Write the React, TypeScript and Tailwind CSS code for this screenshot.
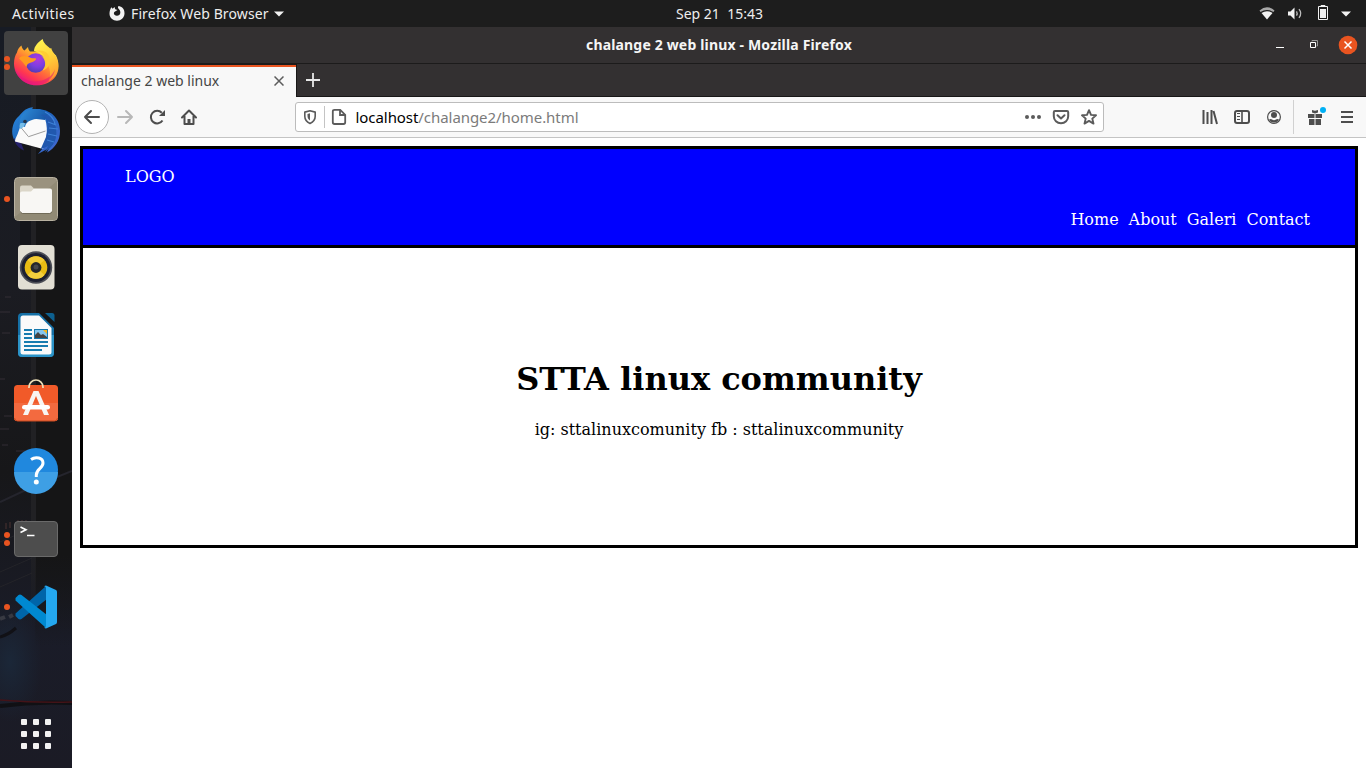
import type { ReactNode } from "react";

const UI = "font-['Noto_Sans','Open_Sans',sans-serif]";

function FirefoxIcon() {
  return (
    <svg width="48" height="48" viewBox="0 0 48 48">
      <defs>
        <linearGradient id="fx" x1="0.85" y1="0.1" x2="0.25" y2="0.95">
          <stop offset="0" stopColor="#fff44f" />
          <stop offset="0.3" stopColor="#ffb52b" />
          <stop offset="0.55" stopColor="#ff7139" />
          <stop offset="0.8" stopColor="#ff3750" />
          <stop offset="1" stopColor="#e31587" />
        </linearGradient>
        <radialGradient id="fxg" cx="0.6" cy="0.3" r="0.8">
          <stop offset="0" stopColor="#b338dc" />
          <stop offset="0.5" stopColor="#7a3fe0" />
          <stop offset="1" stopColor="#4a3aa8" />
        </radialGradient>
        <linearGradient id="fxy" x1="0.3" y1="0" x2="0.6" y2="1">
          <stop offset="0" stopColor="#fff44f" />
          <stop offset="0.5" stopColor="#ffd03a" />
          <stop offset="1" stopColor="#ff9a2e" />
        </linearGradient>
      </defs>
      <path d="M9.500 6.500c.3 2.500 1.500 4 3 5l3.500-3.500c.2 2 .8 3 2 4.500h8c3-5 13-2 18 4 3.500 7 3.500 15-.5 21C39.500 43 32 46.500 24 46.300 12 46 2 36.500 2 24.500c0-4.500 1-8 3-11 .3-2.500 2-5 4.500-7z" fill="url(#fx)" />
      <path d="M22 12c0-5 5-9.500 8.700-12 .8 4.500 4 6 7.500 9.500l1-.5c.3 2.500 2.500 4.500 4.500 8 5 10 2 20-7 25 2-6 2-11-1-16-2-6-5-12-13.700-14z" fill="url(#fxy)" />
      <circle cx="23.700" cy="24" r="9.800" fill="url(#fxg)" />
      <path d="M7 19.500c2-3 7-3 10.500-1.200 2 1.200 4.500.9 6.700 1.100-.2 2-3 3.500-5.200 4-3 .8-4 2-4.500 4.500C12 25 10 22 7 19.500z" fill="#ff9a1f" />
      <path d="M24 12c4 .3 7.500 3 9 7l-4-2.500c5 4 5.500 11 1.500 15 5-1 8-6 7-12-1-6-6-9-13.500-7.500z" fill="#ffcb32" opacity=".9" />
      <path d="M3 29c3 9 13 15 24 13 8-1 14-6 16-12-1 9-9 16.300-19 16.300S4 39 3 29z" fill="#e5157c" opacity=".55" />
    </svg>
  );
}

function ThunderbirdIcon() {
  return (
    <svg width="48" height="48" viewBox="0 0 48 48">
      <defs>
        <linearGradient id="tb" x1="0" y1="0" x2="1" y2="0.8">
          <stop offset="0" stopColor="#2a8be0" />
          <stop offset="0.5" stopColor="#1c62b8" />
          <stop offset="1" stopColor="#4169d0" />
        </linearGradient>
        <linearGradient id="tbh" x1="0" y1="0" x2="1" y2="0.4">
          <stop offset="0" stopColor="#2f8fdb" />
          <stop offset="1" stopColor="#1858a8" />
        </linearGradient>
      </defs>
      <path d="M7 9C12 3 15 1 21 .3L20 2.500C35 0 48 9 48 24c0 10-5 17-13 21.500l2-4.500-11 6 5-6L3 34C0 30-.5 24 1 18.500 2 14.500 4 11.500 7 9z" fill="url(#tb)" />
      <path d="M2 31c1 6 4 10 10 12.500L9.500 37z" fill="#24206b" />
      <path d="M8.500 19L20 12l13-.5c2 6 2.500 13 1 20L31 42 3 34.500c0-3 2-5 3.500-10z" fill="#fafafa" />
      <path d="M8.500 20l8 9.700 17-5.700" fill="none" stroke="#9c9c9c" strokeWidth="1" />
      <path d="M7 20C6.500 9 14 2 21 2c6 0 11 1 15 5l-3 6c-4 0-9-2-13 0-4 1-6 3-7 7-2-1-4-1-6 0z" fill="url(#tbh)" />
      <path d="M8.500 16c-1 2-1.500 4-.2 6 3-1 4.200-3 5-6z" fill="#76bde8" />
      <circle cx="13" cy="14.500" r="1.800" fill="#26354a" />
      <path d="M28 8c8 1 9 10 6 22l-5.500 12.500L36 39l-3 6c9-6 12.500-13 11-23C43 11 36 7 28 8z" fill="#2158ae" />
      <path d="M33 5c6 3 9 7 10 12M36 15l8 3M37 21l9 1M36 27l9 2M35 33l7 2" stroke="#3f82d8" strokeWidth="1.200" fill="none" />
    </svg>
  );
}

function FilesIcon() {
  return (
    <svg width="48" height="48" viewBox="0 0 48 48">
      <rect x="2.500" y="2.500" width="43" height="43" rx="4" fill="#9a927f" stroke="#b9b2a1" />
      <path d="M3 42L45 6v36q0 3-3 3H6q-3 0-3-3z" fill="#918a75" />
      <path d="M8 12.500q0-2 2-2h9l3 3v7H8z" fill="#dbd6c8" />
      <path d="M8 18.500q0-2 2-2h9l3-3h16q2 0 2 2V36q0 2-2 2H10q-2 0-2-2z" fill="#f8f7f4" />
      <path d="M8.500 36.500q.5 2 2 2h27q2 0 2.500-2" fill="none" stroke="#716b58" strokeWidth="1" />
    </svg>
  );
}

function MusicIcon() {
  return (
    <svg width="48" height="48" viewBox="0 0 48 48">
      <rect x="6" y="2" width="36.500" height="44.500" rx="4" fill="#e2dfd4" />
      <circle cx="24" cy="24.500" r="16.200" fill="#4b4d55" />
      <circle cx="24" cy="24.500" r="14.500" fill="#1d2030" />
      <circle cx="24" cy="24.500" r="11.300" fill="#e8bb13" />
      <path d="M24 24.500L15.500 17a11.300 11.300 0 0 1 17 0z" fill="#f3cb35" />
      <path d="M24 24.500L15.500 32a11.300 11.300 0 0 0 17 0z" fill="#f3cf3d" />
      <circle cx="24" cy="24.500" r="5.400" fill="#25262b" />
      <circle cx="24" cy="24" r="2.500" fill="#46474c" />
    </svg>
  );
}

function WriterIcon() {
  return (
    <svg width="48" height="48" viewBox="0 0 48 48">
      <path d="M10 2h17l15 15v25q0 4-4 4H10q-4 0-4-4V6q0-4 4-4z" fill="#1570a6" />
      <path d="M6 24h36v18q0 4-4 4H10q-4 0-4-4z" fill="#2b93c7" />
      <path d="M33 2h7q2.500 0 2.500 2.500V11z" fill="#0d608f" />
      <path d="M11 4.500h16L39.500 17v24q0 2.500-2.500 2.500H11q-2.500 0-2.500-2.500V7q0-2.500 2.500-2.500z" fill="#fafafa" />
      <path d="M12 19h8M12 23h8M12 27h8M12 31h24M12 35h24M12 39h18" stroke="#187caf" strokeWidth="2" />
      <rect x="22" y="18" width="14" height="10" fill="#1477ac" />
      <rect x="23" y="19" width="12" height="8" fill="#84c6ef" />
      <path d="M31 19h4v4z" fill="#f4b51e" />
      <path d="M23 27v-3l3-3 3 3 2-1 4 3v1z" fill="#434343" />
    </svg>
  );
}

function SoftwareIcon() {
  return (
    <svg width="48" height="48" viewBox="0 0 48 48">
      <rect x="2" y="6" width="44" height="36" rx="3.500" fill="#f15a29" />
      <path d="M2 24h44v14.500q0 3.500-3.500 3.500h-37Q2 42 2 38.500z" fill="#f36a3f" />
      <path d="M2.500 39q.5 3 3 3h37q2.500 0 3-3" fill="none" stroke="#c94a20" />
      <path d="M17 9V8a7 7 0 0 1 14 0v1" fill="none" stroke="#eee0b9" strokeWidth="1.700" />
      <path d="M21.500 12h5L37 36h-5l-8-19-8 19h-5z" fill="#f8f5f2" />
      <rect x="10" y="26" width="28" height="4.600" rx="2.300" fill="#fff" />
    </svg>
  );
}

function HelpIcon() {
  return (
    <svg width="48" height="48" viewBox="0 0 48 48">
      <circle cx="24" cy="23" r="22" fill="#2088de" />
      <path d="M2 25a22 22 0 0 0 44 0z" fill="#3e9fe5" />
      <path d="M19 12.500c5-3.500 12-1.500 12 3.500 0 5.500-6.700 6-6.700 12v2" fill="none" stroke="#fff" strokeWidth="3" />
      <circle cx="24.300" cy="35" r="2.500" fill="#fff" />
    </svg>
  );
}

function TerminalIcon() {
  return (
    <svg width="48" height="48" viewBox="0 0 48 48">
      <rect x="2.500" y="6.500" width="43" height="35" rx="3.500" fill="#4d4d4d" stroke="#6a6a6a" />
      <path d="M8.500 12l5.500 2.700-5.500 2.800" fill="none" stroke="#fff" strokeWidth="1.600" />
      <path d="M15 20.500h7.500" stroke="#fff" strokeWidth="1.500" />
    </svg>
  );
}

function CodeIcon() {
  return (
    <svg width="48" height="48" viewBox="0 0 48 48">
      <path d="M34 3L3.500 30.500v2.500l3 3q1.500.8 3 0L35 16z" fill="#0065a9" />
      <path d="M34 45L3.500 17.500V15l3-3q1.500-.8 3 0L35 32z" fill="#0089d1" />
      <path d="M34 2.500l10 4.500q1 .5 1 2v30q0 1.500-1 2l-10 4.500q-1 0-2-1 2 .5 2-1.500V5q0-2-2-1.500 1-1 2-1z" fill="#24a8f0" />
    </svg>
  );
}

function DockItem({ children, dots = 0, active = false }: { children: ReactNode; dots?: number; active?: boolean }) {
  return (
    <div className={active ? "relative flex h-16 w-16 shrink-0 items-center justify-center rounded bg-[#414141]" : "relative flex h-16 w-16 shrink-0 items-center justify-center"}>
      {children}
      <div className="absolute top-0 left-0 flex h-full flex-col justify-center gap-0.5">
        {Array.from({ length: dots }, (_, i) => (
          <span key={i} className="h-1.5 w-1.5 rounded-full bg-[#e95420]" />
        ))}
      </div>
    </div>
  );
}

function Dock() {
  return (
    <aside className="relative w-[72px] shrink-0 overflow-hidden bg-[#17171b]">
      <svg className="absolute inset-0" width="72" height="741" viewBox="0 0 72 741">
        <defs>
          <linearGradient id="wall" x1="0" y1="0" x2="0" y2="1">
            <stop offset="0" stopColor="#171b24" />
            <stop offset="0.35" stopColor="#1b1c22" />
            <stop offset="0.6" stopColor="#171719" />
            <stop offset="0.82" stopColor="#1a1c28" />
            <stop offset="1" stopColor="#1b1b25" />
          </linearGradient>
          <linearGradient id="pillar" x1="0" y1="0" x2="0" y2="1">
            <stop offset="0" stopColor="#151516" />
            <stop offset="0.85" stopColor="#151516" />
            <stop offset="1" stopColor="#151516" stopOpacity="0" />
          </linearGradient>
          <linearGradient id="edge" x1="0" y1="0" x2="0" y2="1">
            <stop offset="0" stopColor="#212124" />
            <stop offset="0.85" stopColor="#212124" />
            <stop offset="1" stopColor="#212124" stopOpacity="0" />
          </linearGradient>
          <radialGradient id="glow">
            <stop offset="0" stopColor="#1b2738" />
            <stop offset="1" stopColor="#1b2738" stopOpacity="0" />
          </radialGradient>
        </defs>
        <rect width="72" height="741" fill="url(#wall)" />
        <rect x="35" width="37" height="620" fill="url(#pillar)" />
        <rect x="31" width="5" height="600" fill="url(#edge)" />
        <rect x="20" y="110" width="11" height="110" fill="#14151a" />
        <ellipse cx="10" cy="635" rx="32" ry="60" fill="url(#glow)" />
        <path d="M0 475l30-14 42-17" stroke="#25252d" strokeWidth="2" fill="none" />
        <path d="M0 560l32-14M0 545l32-14M0 515l32-14" stroke="#242429" fill="none" />
        <path d="M5 270h6M0 285h10M2 306h8M0 352h5M4 389h8M0 402h9M2 418h6M16 424h12" stroke="#373039" strokeWidth="1.500" opacity=".6" />
        <path d="M6 496v6M10 495v6M18 493v6M22 493v6M26 493v6" stroke="#3a2a2b" strokeWidth="1.500" />
        <path d="M0 592l5-2M9 590l4-2" stroke="#55555a" strokeWidth="4" opacity=".5" />
        <path d="M0 610q8-2 16-9" stroke="#111116" strokeWidth="3" fill="none" />
        <path d="M0 679q36-5 72-3" stroke="#101014" strokeWidth="4" fill="none" />
        <path d="M0 673q36 3 72 2" stroke="#431318" strokeWidth="1.500" fill="none" />
      </svg>
      <div className="relative flex h-full flex-col gap-1 px-1 pt-1">
        <DockItem active dots={2}><FirefoxIcon /></DockItem>
        <DockItem><ThunderbirdIcon /></DockItem>
        <DockItem dots={1}><FilesIcon /></DockItem>
        <DockItem><MusicIcon /></DockItem>
        <DockItem><WriterIcon /></DockItem>
        <DockItem><SoftwareIcon /></DockItem>
        <DockItem><HelpIcon /></DockItem>
        <DockItem dots={2}><TerminalIcon /></DockItem>
        <DockItem dots={1}><CodeIcon /></DockItem>
        <div className="mt-auto mb-[19px] grid grid-cols-3 gap-1.5 self-center">
          {Array.from({ length: 9 }, (_, i) => (
            <span key={i} className="h-1.5 w-1.5 rounded-[1px] bg-[#f2f2f2]" />
          ))}
        </div>
      </div>
    </aside>
  );
}

function TopBar() {
  return (
    <header className="grid h-[27px] shrink-0 grid-cols-[583px_1fr_583px] items-center bg-[#1d1d1d] text-[14px] leading-[27px] text-[#eeeeee]">
      <div className="flex items-center pl-3">
        <span className="w-[97px] tracking-[0.42px]">Activities</span>
        <svg width="16" height="16" viewBox="0 0 16 16" className="mr-1.5">
          <path d="M2.300 1.300l1.400 1.500L5.500 1l.7 2.300 2.300.8-2 1.200c-2.500 1-2 4.300 1.300 4.500 4 .2 4.600-4.500 2-6.800-1-.8-1.200-2.400 0-3 4 .8 6 4 5.700 7.800-.3 4-3.500 7-7.500 7S.5 11.800.5 7.800c0-2.400.7-4.800 1.800-6.500z" fill="#f2f2f2" />
        </svg>
        <span className="w-[143px] tracking-[0.12px] whitespace-nowrap">Firefox Web Browser</span>
        <svg width="10" height="6" viewBox="0 0 10 6"><path d="M0 .5h10L5 5.500z" fill="#f2f2f2" /></svg>
      </div>
      <div className="pl-[93px] whitespace-pre">Sep 21  15:43</div>
      <div className="flex items-center justify-end pr-[15px]">
        <svg width="92" height="18" viewBox="0 0 92 18" fill="#f2f2f2">
          <path d="M.5 5.500q7.500-6.500 15 0l-1 1.500q-6.500-4-13 0z" opacity=".65" />
          <path d="M2.500 8q5.500-3.500 11 0L8 14.500z" />
          <path d="M29 6.500h2.500l4-4v12l-4-4H29z" />
          <path d="M37.500 6.300q1.300 2.200 0 4.400M40 4.200q3.500 4.200 0 8.600" fill="none" stroke="#bdbdbd" strokeWidth="1.300" />
          <path d="M62 .5h4v1h-4zM59.500 1.500h9v13h-9z" fill="none" stroke="#f2f2f2" />
          <path d="M61 4h6v9h-6zM82 6.500h10l-5 5z" />
        </svg>
      </div>
    </header>
  );
}

function TitleBar() {
  return (
    <div className="grid h-[37px] shrink-0 grid-cols-[500px_1fr_500px] items-center border-b border-[#1c1b1b] bg-[#333031]">
      <span />
      <div className="pb-px text-center text-[14px] font-bold tracking-[0.17px] whitespace-nowrap text-[#f5f5f5]">chalange 2 web linux - Mozilla Firefox</div>
      <svg className="justify-self-end" width="100" height="36" viewBox="0 0 100 36" fill="none" stroke="#fff">
        <path d="M10 20.500h8" />
        <path d="M44.500 15.500h5v5h-5z" />
        <path d="M46 14.500v-1h5.500V19h-1" stroke="#999" />
        <circle cx="82" cy="18" r="9.300" fill="#e95420" stroke="none" />
        <path d="M78.500 14.500l7 7M85.500 14.500l-7 7" strokeWidth="1.500" />
      </svg>
    </div>
  );
}

function TabBar() {
  return (
    <div className="flex h-[33px] shrink-0 bg-[#333031]">
      <div className="flex w-[224px] flex-col bg-[#f8f8f8]">
        <div className="h-[3px] border-t border-[#1c1b1b] bg-[#e95420]" />
        <div className="flex h-7 items-center pr-3 pl-[9px]">
          <span className="flex-1 pb-px text-[14px] whitespace-nowrap text-[#454545]">chalange 2 web linux</span>
          <svg width="10" height="10" viewBox="0 0 10 10" stroke="#5c5c5c" strokeWidth="1.500"><path d="M.5.5l9 9M9.500.5l-9 9" /></svg>
        </div>
      </div>
      <div className="flex flex-1 items-center border-b border-l border-[#181717] pl-[9px]">
        <svg width="14" height="14" viewBox="0 0 14 14" stroke="#e8e8e8" strokeWidth="1.800"><path d="M7 0v14M0 7h14" /></svg>
      </div>
    </div>
  );
}

function UrlField() {
  return (
    <div className="flex h-[30px] w-[809px] items-center rounded-[3px] border border-[#bcbcbc] bg-white pr-1.5 pl-[7px]">
      <svg width="46" height="24" viewBox="0 0 46 24" fill="none" stroke="#5b5b5b">
        <path d="M7 5.800l5.200 1.300v4.200c0 3.300-2.200 5.800-5.200 7.200-3-1.400-5.200-3.900-5.200-7.200V7.100z" strokeWidth="1.600" strokeLinejoin="round" />
        <path d="M7 8.300v7.300c-1.800-1.200-2.500-2.700-2.500-4.500V9z" fill="#5b5b5b" stroke="none" />
        <path d="M21.500 1v22" stroke="#c4c4c4" />
        <path d="M31.500 4.800h5.700l5 5v7.500q0 1.700-1.700 1.700h-9q-1.700 0-1.700-1.700V6.500q0-1.700 1.700-1.700zM37 5v5h5" strokeWidth="1.800" />
      </svg>
      <div className="flex-1 pl-[6.500px] text-[15px] tracking-[-0.06px] whitespace-nowrap text-[#7b7b7b]"><span className="text-black">localhost</span>/chalange2/home.html</div>
      <svg width="72" height="18" viewBox="0 0 72 18" fill="none" stroke="#5b5b5b" strokeWidth="2">
        <g fill="#5b5b5b" stroke="none"><circle cx="2" cy="9" r="2" /><circle cx="8" cy="9" r="2" /><circle cx="14" cy="9" r="2" /></g>
        <path d="M30 3h12q1.200 0 1.200 1.200v4c0 4-3.200 7-7.200 7s-7.200-3-7.200-7v-4Q28.800 3 30 3z" />
        <path d="M32.500 7.200L36 10.500l3.500-3.300" strokeLinecap="round" strokeLinejoin="round" />
        <path d="M64 2.200l2 4.700 5 .4-3.700 3.300 1.200 5-4.500-2.700-4.500 2.700 1.200-5L57 7.300l5-.4z" strokeWidth="1.900" strokeLinejoin="round" />
      </svg>
    </div>
  );
}

function Toolbar() {
  return (
    <div className="flex h-[41px] shrink-0 items-center border-b border-[#c4c4c4] bg-[#f8f8f8]">
      <svg width="223" height="40" viewBox="0 0 223 40" fill="none" stroke="#4d4d4d" strokeWidth="2">
        <circle cx="20" cy="20" r="16.500" fill="#fff" stroke="#b3b3b3" strokeWidth="1" />
        <path d="M13 20h14M19 14l-6 6 6 6" strokeLinecap="round" strokeLinejoin="round" />
        <path d="M46 20h14M54 14l6 6-6 6" stroke="#b8b8b8" strokeLinecap="round" strokeLinejoin="round" />
        <path d="M90.500 23.500a6.300 6.300 0 1 1-.7-7.700" />
        <path d="M93 13v6h-6z" fill="#4d4d4d" stroke="none" />
        <path d="M110 20.500l7-7 7 7M112.500 19v8h9v-8" strokeLinecap="round" strokeLinejoin="round" />
        <path d="M115.500 22h3v5h-3z" fill="#4d4d4d" stroke="none" />
      </svg>
      <UrlField />
      <svg className="ml-auto" width="176" height="40" viewBox="0 0 176 40" fill="none" stroke="#4d4d4d" strokeWidth="2">
        <path d="M13.500 13v14M17.500 15v12M21.500 13v14M23.500 14L27 27" strokeWidth="2" />
        <rect x="45" y="14" width="14" height="12" rx="2" strokeWidth="2" />
        <path d="M52 14v12" strokeWidth="1.600" /><path d="M47 16.500h3M47 19.500h3M47 22.500h3" strokeWidth="1" />
        <circle cx="84" cy="20" r="6.400" strokeWidth="1.200" />
        <circle cx="84" cy="18" r="3" fill="#4d4d4d" stroke="none" />
        <path d="M79 22.500q2-1 3 0 2 1.500 4 0 1-1 3 0-1.500 3-5 3t-5-3z" fill="#4d4d4d" stroke="none" />
        <path d="M103.500 3v34" stroke="#d1d1d1" strokeWidth="1" />
        <path d="M118 17h6.500v4H118zM125.500 17h6.500v4h-6.500zM119 22h5.500v6H119zM125.500 22h5.500v6h-5.500zM122 13l3 .8 3-.8v2.500l-3 1-3-1z" fill="#4d4d4d" stroke="none" />
        <circle cx="133" cy="13" r="3" fill="#00b0f5" stroke="none" />
        <path d="M151 15h12M151 20h12M151 25h12" strokeWidth="1.900" />
      </svg>
    </div>
  );
}

function WebPage() {
  return (
    <main className="flex-1 bg-white p-2 font-['DejaVu_Serif',serif] text-[16px] leading-[19px] text-black">
      <div className="border-[3px] border-black">
        <nav className="flex h-[99px] flex-col border-b-[3px] border-black bg-[#0000ff] text-white">
          <div className="pt-[18px] pl-[42px]">LOGO</div>
          <ul className="mt-6 flex justify-end gap-[10px] pr-[45px]">
            <li>Home</li>
            <li>About</li>
            <li>Galeri</li>
            <li>Contact</li>
          </ul>
        </nav>
        <section className="h-[297px] pt-[112px] text-center">
          <h1 className="text-[32px] leading-[38px] font-bold">STTA linux community</h1>
          <p className="mt-[22px]">ig: sttalinuxcomunity fb : sttalinuxcommunity</p>
        </section>
      </div>
    </main>
  );
}

export default function App() {
  return (
    <div className={`flex h-screen w-full flex-col overflow-hidden ${UI}`}>
      <TopBar />
      <div className="flex min-h-0 flex-1">
        <Dock />
        <div className="flex min-w-0 flex-1 flex-col">
          <TitleBar />
          <TabBar />
          <Toolbar />
          <WebPage />
        </div>
      </div>
    </div>
  );
}
